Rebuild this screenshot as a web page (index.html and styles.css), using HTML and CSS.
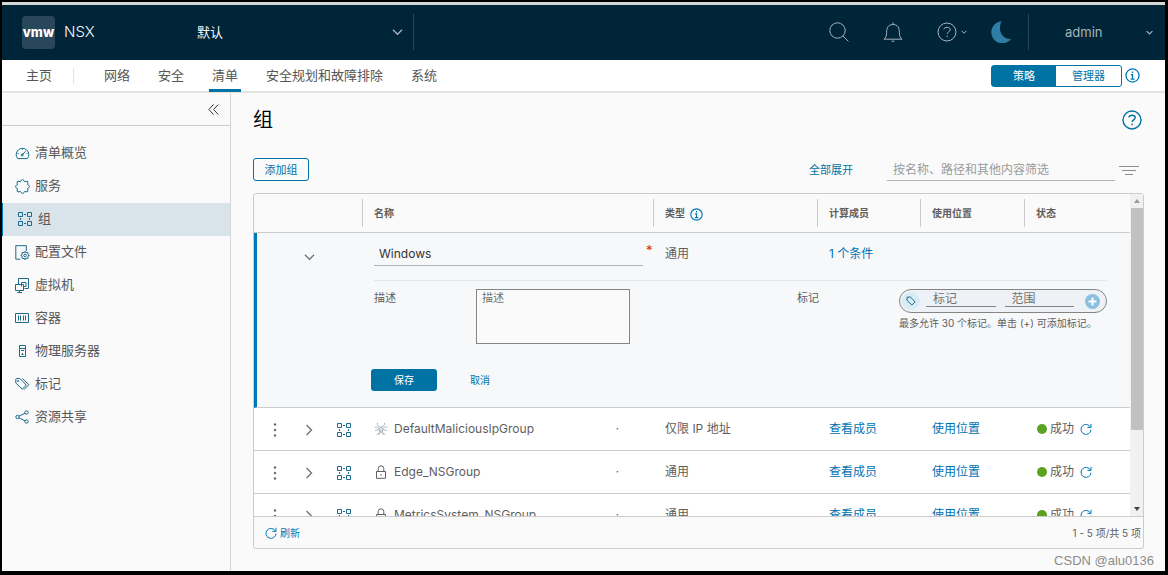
FILE: index.html
```html
<!DOCTYPE html>
<html lang="zh-CN">
<head>
<meta charset="utf-8">
<title>NSX</title>
<link rel="stylesheet" href="styles.css">
</head>
<body>
<svg class="defs" aria-hidden="true">
  <symbol id="group" viewBox="0 0 14 14"><path d="M.5.5h4v4h-4zM9.500.5h4v4h-4zM.5 9.500h4v4h-4zM9.500 9.500h4v4h-4z"/><path d="M6 2.500h2M6 11.500h2M2.500 6v2M11.500 6v2"/></symbol>
  <symbol id="refresh" viewBox="0 0 12 12"><path d="M10.500 4.200A5 5 0 1 0 11 6.600M11 .8v3.600H7.400"/></symbol>
  <symbol id="lock" viewBox="0 0 12 14"><path d="M1.500 6.500h9v6.800h-9zM3.200 6.500V3.600a2.800 2.800 0 0 1 5.600 0v2.900M6 9v1.800"/></symbol>
  <symbol id="right" viewBox="0 0 8 12"><path d="M1.500 1 6.500 6l-5 5"/></symbol>
  <symbol id="down" viewBox="0 0 12 8"><path d="M1 1.500 6 6.500l5-5"/></symbol>
  <symbol id="info" viewBox="0 0 16 16"><circle cx="8" cy="8" r="7"/><path d="M8 3.800v1.600M6.300 7.200H8v4.600M6 11.800h4.200"/></symbol>
  <symbol id="help" viewBox="0 0 20 20"><circle cx="10" cy="10" r="9"/><path d="M6.800 7.400c.4-1.400 1.600-2.100 3.200-2.100 1.900 0 3.200 1 3.200 2.500 0 2-3.100 2.100-3.100 4.200M10.100 13.600v1.600"/></symbol>
  <symbol id="more" viewBox="0 0 4 14"><g fill="#6a6a6a" stroke="none"><circle cx="2" cy="1.500" r="1.200"/><circle cx="2" cy="7" r="1.200"/><circle cx="2" cy="12.500" r="1.200"/></g></symbol>
</svg>
<div class="app">
  <header class="topbar">
    <div class="logo">vmw</div>
    <span class="product">NSX</span>
    <button class="project"><span>默认</span><svg width="11" height="8" class="bold"><use href="#down"/></svg></button>
    <div class="tools">
      <button aria-label="搜索"><svg width="20" height="20" viewBox="0 0 20 20"><circle cx="8.500" cy="8.500" r="7.700"/><path d="m14 14 5.400 5.400"/></svg></button>
      <button aria-label="通知"><svg width="20" height="20" viewBox="0 0 20 20"><path d="M1 17.200h18c-2-1.700-2.600-3.500-2.600-6.700 0-4.700-1.800-8-6.400-8s-6.400 3.300-6.400 8c0 3.200-.6 5-2.600 6.700zM8.600 19.200h2.800M10 .5v2"/></svg></button>
      <button class="help-menu" aria-label="帮助"><svg width="20" height="20"><use href="#help"/></svg><svg width="6" height="4"><use href="#down" class="thick"/></svg></button>
      <button class="moon" aria-label="深色模式"><svg width="20" height="22" viewBox="0 0 20 22"><path d="M10.500.3A11 11 0 1 0 20 18C10.500 18 6.500 9 10.500.3z"/></svg></button>
    </div>
    <button class="user"><span>admin</span><svg width="7" height="5"><use href="#down" class="thick"/></svg></button>
  </header>
  <nav class="tabs">
    <a href="#" class="home">主页</a>
    <a href="#">网络</a><a href="#">安全</a><a href="#" class="active">清单</a><a href="#">安全规划和故障排除</a><a href="#">系统</a>
    <div class="mode"><button class="on">策略</button><button>管理器</button></div>
    <svg class="blue bold" width="15" height="15"><use href="#info"/></svg>
  </nav>
  <div class="body">
    <aside class="side">
      <div class="collapse"><button aria-label="折叠"><svg width="11" height="11" viewBox="0 0 11 11"><path d="M5.500.5.8 5.500l4.700 5M10.300.5 5.600 5.500l4.700 5"/></svg></button></div>
      <ul class="menu">
        <li><a href="#"><svg width="15" height="14" viewBox="0 0 15 14"><path d="M2.600 12.600A6.300 6.300 0 1 1 12.400 12.600zM7 9.200l3.600-4M7.500 2.500v1M2.700 7.500h1M11.500 7.500h1"/><circle cx="7.200" cy="9" r="1"/></svg><span>清单概览</span></a></li>
        <li><a href="#"><svg width="15" height="15" viewBox="0 0 15 15"><path d="M6 1.500 7.500.6 9 1.500l.6 1.200 1.400-.4 1.700.200.200 1.700-.4 1.300 1.200.6.900 1.400-.9 1.500-1.200.6.400 1.300-.2 1.700-1.700.2-1.400-.4L9 13.600l-1.500.9-1.500-.9-.6-1.200-1.400.4-1.700-.2-.2-1.700.4-1.300-1.200-.6L.5 7.500l.8-1.400 1.200-.6-.4-1.300.2-1.700L4 2.300l1.400.4z"/></svg><span>服务</span></a></li>
        <li class="current"><a href="#"><svg width="14" height="14"><use href="#group"/></svg><span>组</span></a></li>
        <li><a href="#"><svg width="15" height="15" viewBox="0 0 15 15"><path d="M11.300 6V.7H.8v13.500h4.500"/><circle cx="10" cy="10.500" r="3.500"/><circle cx="10" cy="10.500" r="1.300"/><path d="M10 6v1M10 14v1M5.500 10.500h1M13.500 10.500h1M6.900 7.400l.6.600M12.500 13l.6.600M13.100 7.400l-.6.600M7.500 13l-.6.600"/></svg><span>配置文件</span></a></li>
        <li><a href="#"><svg width="15" height="15" viewBox="0 0 15 15"><path d="M.5 6.500h8v6h-8zM2.500 14.500h4.500M4.500 12.500v2M3.500 6V.5h10v10H9.500M6.500 8.500v-4h4.500v4H8.500"/></svg><span>虚拟机</span></a></li>
        <li><a href="#"><svg width="15" height="12" viewBox="0 0 15 12"><path d="M.5 1.500h13v9h-13zM3.500 3.500v5M5.500 3.500v5M8.500 3.500v5M10.500 3.500v5"/></svg><span>容器</span></a></li>
        <li><a href="#"><svg width="15" height="14" viewBox="0 0 15 14"><path d="M4.500 1.500h6v11h-6zM4.500 4.500h6M6 6.500h3M7.500 9v2M6.500 10.500h2"/></svg><span>物理服务器</span></a></li>
        <li><a href="#"><svg width="15" height="14" viewBox="0 0 15 14"><path d="M.8 2v4l6.500 6.200 4-4.200L5 1.500H1.500zM7.500 1.500l6.400 6.200-5 5"/><circle cx="3" cy="4" r=".6"/></svg><span>标记</span></a></li>
        <li><a href="#"><svg width="15" height="14" viewBox="0 0 15 14"><circle cx="2.500" cy="7" r="1.700"/><circle cx="11.500" cy="2.500" r="1.700"/><circle cx="11.500" cy="11.500" r="1.700"/><path d="m4 6.200 6-3M4 7.800l6 3"/></svg><span>资源共享</span></a></li>
      </ul>
    </aside>
    <main>
      <div class="title"><h1>组</h1><button class="blue bold" aria-label="帮助"><svg width="20" height="20"><use href="#help"/></svg></button></div>
      <div class="actions">
        <button class="add">添加组</button>
        <a href="#" class="expand">全部展开</a>
        <input class="search" aria-label="筛选" placeholder="按名称、路径和其他内容筛选">
        <button class="filter" aria-label="筛选条件"><svg width="20" height="10" viewBox="0 0 20 10"><path d="M0 1.500h20M3 5.500h14M6 9.500h8"/></svg></button>
      </div>
      <section class="panel">
        <div class="scroller">
          <div class="view">
            <table>
              <colgroup><col class="c-act"><col><col class="c-type"><col class="c-mem"><col class="c-use"><col class="c-state"></colgroup>
              <thead><tr><th></th><th>名称</th><th>类型 <svg class="blue bold" width="13" height="13"><use href="#info"/></svg></th><th>计算成员</th><th>使用位置</th><th>状态</th></tr></thead>
              <tbody class="edit">
                <tr class="edit-top">
                  <td><button class="fold" aria-label="收起"><svg width="11" height="8"><use href="#down"/></svg></button></td>
                  <td><div class="name-field"><input value="Windows" aria-label="名称"><span>*</span></div></td>
                  <td>通用</td><td><a href="#">1 个条件</a></td><td></td><td></td>
                </tr>
                <tr><td colspan="6" class="detail">
                  <div class="form">
                    <label for="desc">描述</label>
                    <textarea id="desc" placeholder="描述"></textarea>
                    <label for="tag">标记</label>
                    <div class="tags">
                      <div class="pill">
                        <span class="tag-icon"><svg width="10" height="10" viewBox="0 0 10 10"><path d="M1 1.200v3l4.800 4.900L9.200 5.800 4.300 1z"/><circle cx="2.900" cy="2.900" r=".4"/></svg></span>
                        <input id="tag" placeholder="标记"><input placeholder="范围" aria-label="范围">
                        <button aria-label="添加标记"><svg width="15" height="15" viewBox="0 0 15 15"><circle cx="7.500" cy="7.500" r="7.500"/><path d="M7.500 3.500v8M3.500 7.500h8"/></svg></button>
                      </div>
                      <p>最多允许 30 个标记。单击 (+) 可添加标记。</p>
                    </div>
                  </div>
                  <div class="buttons"><button class="save">保存</button><button class="cancel">取消</button></div>
                </td></tr>
              </tbody>
              <tbody class="rows">
                <tr><td><div class="acts"><button aria-label="更多"><svg width="4" height="14"><use href="#more"/></svg></button><button aria-label="展开"><svg width="8" height="12"><use href="#right"/></svg></button><svg class="grp" width="14" height="14"><use href="#group"/></svg></div></td>
                  <td><div class="name"><svg class="hazard" width="14" height="14" viewBox="0 0 14 14"><path d="M3.500.8C3 3 4.500 5 7 5s4-2 3.500-4.200M.8 5.200C3 4.800 5.200 5.500 5.700 7.500s-.7 4.500-3 5M13.200 5.200C11 4.800 8.800 5.500 8.300 7.500s.7 4.500 3 5M1 8.500l4-1M13 8.500l-4-1M4.500 13 7 9.500 9.500 13"/><circle cx="7" cy="7.500" r="1.700"/></svg><span>DefaultMaliciousIpGroup</span><i>·</i></div></td>
                  <td>仅限 IP 地址</td><td><a href="#">查看成员</a></td><td><a href="#">使用位置</a></td><td><div class="state"><b></b>成功<svg class="blue" width="12" height="12"><use href="#refresh"/></svg></div></td></tr>
                <tr><td><div class="acts"><button aria-label="更多"><svg width="4" height="14"><use href="#more"/></svg></button><button aria-label="展开"><svg width="8" height="12"><use href="#right"/></svg></button><svg class="grp" width="14" height="14"><use href="#group"/></svg></div></td>
                  <td><div class="name"><svg width="14" height="14"><use href="#lock"/></svg><span>Edge_NSGroup</span><i>·</i></div></td>
                  <td>通用</td><td><a href="#">查看成员</a></td><td><a href="#">使用位置</a></td><td><div class="state"><b></b>成功<svg class="blue" width="12" height="12"><use href="#refresh"/></svg></div></td></tr>
                <tr><td><div class="acts"><button aria-label="更多"><svg width="4" height="14"><use href="#more"/></svg></button><button aria-label="展开"><svg width="8" height="12"><use href="#right"/></svg></button><svg class="grp" width="14" height="14"><use href="#group"/></svg></div></td>
                  <td><div class="name"><svg width="14" height="14"><use href="#lock"/></svg><span>MetricsSystem_NSGroup</span><i>·</i></div></td>
                  <td>通用</td><td><a href="#">查看成员</a></td><td><a href="#">使用位置</a></td><td><div class="state"><b></b>成功<svg class="blue" width="12" height="12"><use href="#refresh"/></svg></div></td></tr>
              </tbody>
            </table>
          </div>
          <div class="bar" aria-hidden="true"><svg width="6" height="4" viewBox="0 0 6 4"><path d="M0 4h6L3 0z" fill="#999"/></svg><span></span><svg width="6" height="4" viewBox="0 0 6 4"><path d="M0 0h6L3 4z" fill="#444"/></svg></div>
        </div>
        <footer><button><svg width="12" height="12"><use href="#refresh"/></svg>刷新</button><span>1 - 5 项/共 5 项</span></footer>
      </section>
      <div class="watermark">CSDN @alu0136</div>
    </main>
  </div>
</div>
</body>
</html>
```
FILE: styles.css
```css
* { box-sizing: border-box; }
body {
  margin: 0;
  background: #000;
  color: #5e5e5e;
  font: 12px/16px "Inter", "Noto Sans CJK SC", sans-serif;
}
button, input, textarea { font: inherit; color: inherit; }
button { padding: 0; border: 0; background: none; }
a { color: #0072a3; text-decoration: none; }
svg { display: block; flex: none; fill: none; stroke: currentColor; }
.defs { position: absolute; width: 0; height: 0; }
.thick { stroke-width: 2; }
.blue { color: #0079b8; }
.bold { stroke-width: 1.4; }

.app {
  height: 100vh;
  display: flex;
  flex-direction: column;
  background: #fafafa;
  border: solid #000;
  border-width: 2px 3px 4px 2px;
}

/* top bar */
.topbar {
  flex: none;
  display: flex;
  align-items: center;
  height: 58px;
  padding: 0 0 1px 20px;
  border-top: 3px solid #d4d8d8;
  background: #002538;
  color: #fafafa;
}
.logo {
  width: 33px;
  height: 33px;
  border-radius: 4px;
  background: #29475a;
  color: #fff;
  font-size: 13px;
  font-weight: 800;
  line-height: 33px;
  text-align: center;
}
.product { width: 142px; padding-left: 9px; font-size: 15px; font-weight: 300; }
.project {
  display: flex;
  align-items: center;
  justify-content: space-between;
  width: 217px;
  height: 36px;
  padding-right: 10px;
  border-right: 1px solid #29475a;
  font-size: 13px;
}
.project svg, .tools, .user { color: #a6b4bc; }
.tools { display: flex; align-items: center; gap: 34px; margin-left: auto; }
.help-menu { display: flex; align-items: center; gap: 4px; }
.help-menu + .moon { margin-left: -10px; }
.moon svg { fill: #2f7ca5; stroke: none; }
.user {
  display: flex;
  align-items: center;
  justify-content: space-between;
  width: 137px;
  height: 36px;
  margin-left: 17px;
  padding: 0 12px 0 36px;
  border-left: 1px solid #29475a;
  font-size: 13px;
}

/* tabs */
.tabs {
  flex: none;
  display: flex;
  align-items: center;
  height: 33px;
  padding: 0 25px 0 21px;
  border-bottom: 2px solid #e4e4e4;
  background: #fff;
  font-size: 13px;
}
.tabs a { color: #565656; margin-right: 22px; padding: 2px 3px 0; line-height: 27px; border-bottom: 3px solid transparent; }
.tabs .active { border-color: #0072a3; }
.tabs .home {
  margin-right: 27px;
  padding-right: 22px;
  background: linear-gradient(#e4e4e4, #e4e4e4) right 8px / 1px 16px no-repeat;
}
.mode { display: flex; margin: 0 3px 0 auto; border: 1px solid #0072a3; border-radius: 3px; }
.mode button { width: 65px; height: 20px; color: #0072a3; font-size: 11px; }
.mode button.on { width: 64px; background: #0072a3; color: #fff; }

.body { flex: 1; min-height: 0; display: flex; }

/* side menu */
.side { flex: none; width: 229px; border-right: 1px solid #d5d5d5; font-size: 13px; }
.collapse { display: flex; align-items: center; justify-content: flex-end; height: 33px; padding-right: 11px; border-bottom: 1px solid #ccc; color: #333; }
.menu { margin: 0; padding: 11px 0 0; list-style: none; }
.menu a { display: flex; align-items: center; gap: 5px; height: 33px; padding: 0 0 1px 13px; color: #565656; }
.menu span { padding-bottom: 3px; }
.menu svg { color: #1b6a8c; }
.menu .current { background: #d9e4ea; border-left: 1px solid #0079b8; }
.menu .current a { padding-left: 15px; gap: 6px; }

/* content */
main { flex: 1; min-width: 0; display: flex; flex-direction: column; padding: 11px 21px 22px 22px; position: relative; }
.title { display: flex; align-items: center; justify-content: space-between; height: 32px; padding-right: 2px; }
h1 { margin: 0; color: #000; font-size: 20px; line-height: 30px; font-weight: 400; }
.title button { color: #0072a3; }
.actions { display: flex; align-items: center; height: 23px; margin: 22px 0 12px; padding-right: 5px; }
.add { width: 56px; height: 23px; border: 1px solid #0072a3; border-radius: 3px; color: #0072a3; font-size: 11px; }
.expand { margin: 0 34px 0 auto; font-size: 11px; }
.search { width: 228px; height: 23px; padding: 0 6px; border: 0; border-bottom: 1px solid #b3b3b3; background: none; }
.search::placeholder { color: #9a9a9a; }
.filter { margin-left: 4px; color: #8c8c8c; }

.panel { flex: 1; min-height: 0; display: flex; flex-direction: column; border: 1px solid #ccc; border-radius: 3px; }
.scroller { flex: 1; min-height: 0; display: flex; }
.view { flex: 1; min-width: 0; overflow: hidden; }
table { width: 100%; table-layout: fixed; border-collapse: separate; border-spacing: 0; }
.c-act { width: 108px; }
.c-type { width: 164px; }
.c-mem { width: 103px; }
.c-use { width: 104px; }
.c-state { width: 106px; }
th, td { padding: 0 0 0 12px; text-align: left; }
th { height: 39px; border-bottom: 1px solid #ccc; font-size: 10px; font-weight: 700; background: linear-gradient(#ccc, #ccc) 0 5px / 1px 28px no-repeat; }
th:first-child { background: none; }
th svg { display: inline-block; margin-left: 3px; vertical-align: middle; }

.edit { background: #f7f8fa; }
.edit td:first-child { border-left: 3px solid #0079b8; }
.edit-top td { height: 47px; padding-bottom: 6px; }
.edit .fold { margin: 6px 0 0 35px; display: block; color: #737373; }
.name-field { display: flex; }
.name-field input { flex: 1; min-width: 0; height: 24px; padding: 0 5px; border: 0; border-bottom: 1px solid #b3b3b3; background: none; color: #333; }
.name-field span { width: 10px; padding-left: 3px; color: #e12200; font-size: 13px; }
.detail { height: 128px; padding: 0 23px 0 117px; border-bottom: 1px solid #ccc; vertical-align: top; }
.form { display: grid; grid-template-columns: 102px 154px 1fr 208px; border-top: 1px solid #e4e6e8; padding-top: 8px; font-size: 11px; }
.form > label { padding-top: 1px; }
.form label[for="tag"] { text-align: right; padding-right: 80px; }
textarea { display: block; width: 100%; height: 55px; padding: 0 5px; border: 1px solid #858585; background: #fafafa; resize: none; }
textarea::placeholder, .pill input::placeholder { color: #737373; }
.pill { display: flex; align-items: center; height: 24px; padding: 0 6px 0 2px; border: 1px solid #858585; border-radius: 12px; background: #eef2f6; }
.tag-icon { display: grid; place-items: center; width: 18px; height: 18px; border-radius: 50%; background: #d9ecf4; color: #1b6a8c; }
.pill input { flex: 1; min-width: 0; height: 17px; margin: 0 0 5px 6px; padding: 0 7px; border: 0; border-bottom: 1px solid #858585; background: none; font-size: 12px; }
.pill input + input { margin-left: 9px; margin-right: 11px; }
.pill button svg { fill: #89bfdf; stroke: #fff; stroke-width: 2; }
.pill circle { stroke: none; }
.tags p { margin: 2px 0 0; font-size: 10px; white-space: nowrap; }
.buttons { display: flex; margin: 25px 0 0 -3px; font-size: 10px; }
.save { width: 66px; height: 22px; border-radius: 3px; background: #0072a3; color: #fff; }
.cancel { margin-left: 33px; color: #0072a3; }

.rows { background: #fff; }
.rows td { height: 43px; border-bottom: 1px solid #ccc; }
.rows a, .edit a { color: #0072b3; }
.acts { display: flex; align-items: center; padding: 1px 0 0 7px; }
.acts button { margin-right: 28px; color: #737373; }
.acts button + button { margin-right: 24px; }
.acts button + button svg { stroke-width: 1.4; }
.fold svg { stroke-width: 1.4; }
.grp { color: #1b6a8c; }
.name { display: flex; align-items: center; gap: 6px; }
.name i { margin: 0 34px 0 auto; }
.hazard { color: #aab8c4; }
.state { display: flex; align-items: center; }
.state b { width: 10px; height: 10px; margin: 0 3px 0 1px; border-radius: 50%; background: #5aa220; }
.state svg { margin-left: 6px; }

.bar { width: 13px; display: flex; flex-direction: column; align-items: center; padding: 5px 0; background: #f1f1f1; }
.bar svg { stroke: none; }
.bar span { width: 12px; flex: 0 0 71%; margin: 5px 0 auto; background: #c1c1c1; }
.panel footer { flex: none; display: flex; align-items: center; justify-content: space-between; height: 32px; padding: 0 2px 0 11px; border-top: 1px solid #ccc; font-size: 10px; }
footer button { display: flex; align-items: center; gap: 3px; color: #0079b8; }
.watermark { position: absolute; right: 11px; bottom: 2px; color: #8c8c8c; font: 13px/16px "Liberation Sans", sans-serif; }
```
